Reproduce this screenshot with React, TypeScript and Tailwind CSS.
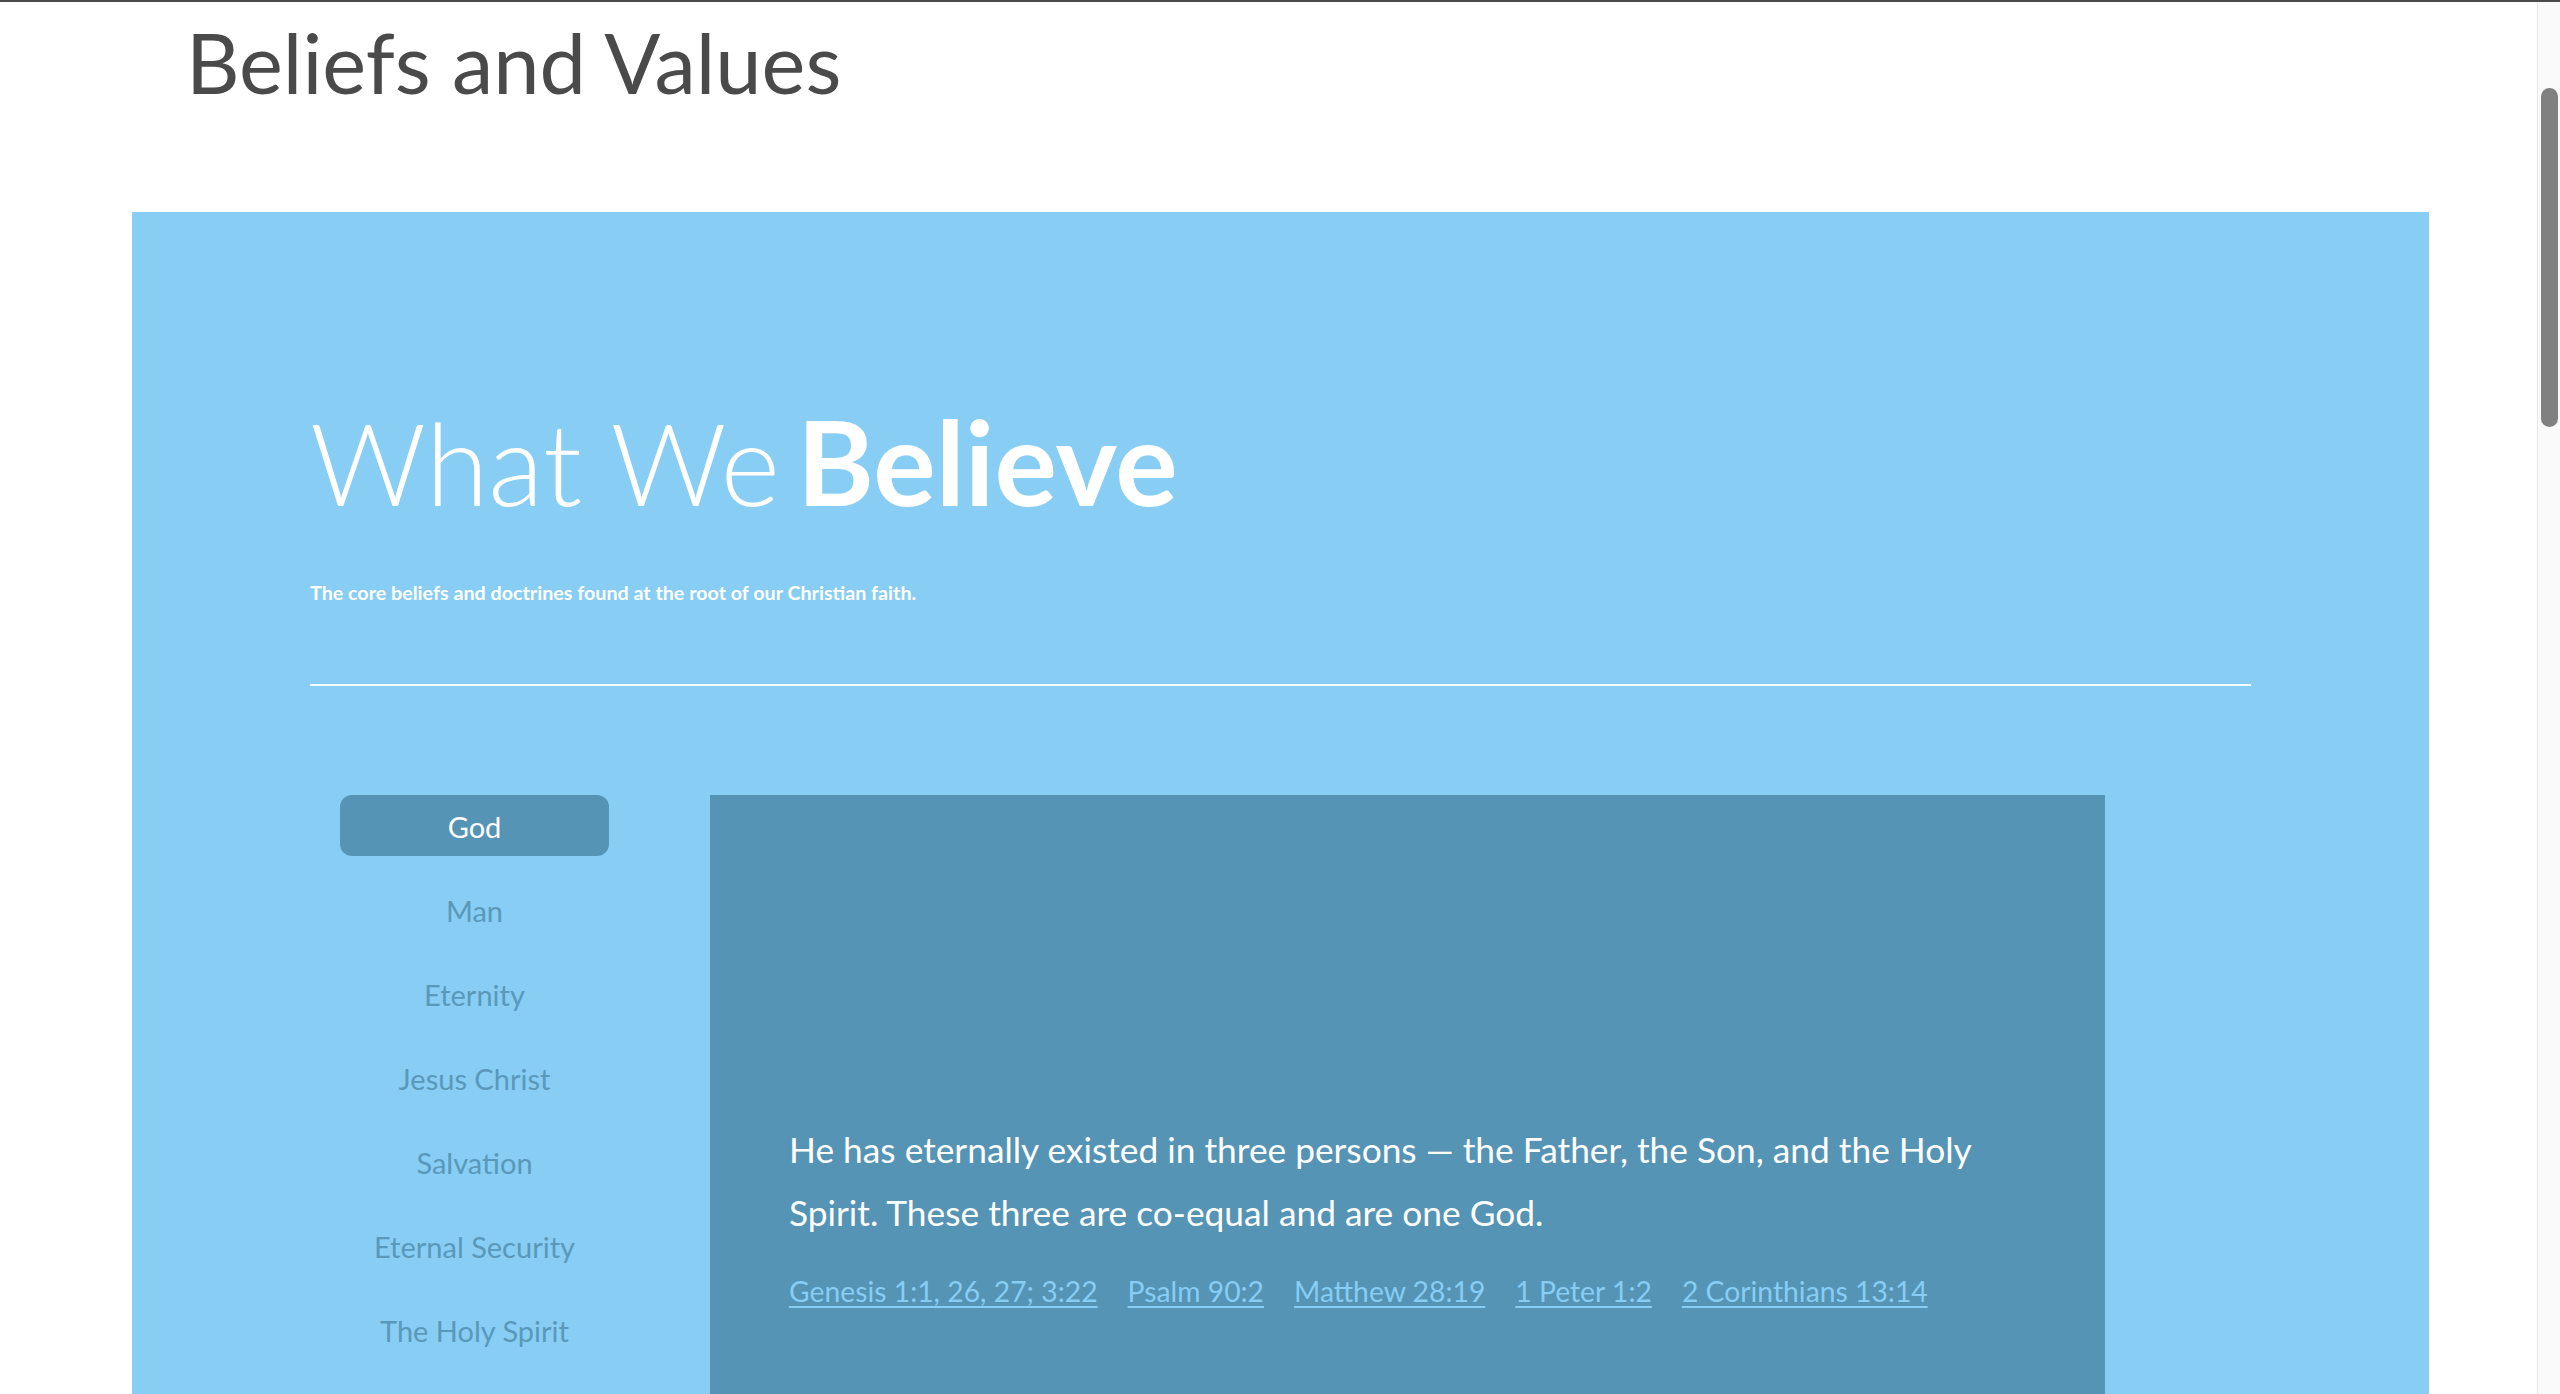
import React from "react";

const topics = [
  "God",
  "Man",
  "Eternity",
  "Jesus Christ",
  "Salvation",
  "Eternal Security",
  "The Holy Spirit",
];

const refs = [
  "Genesis 1:1, 26, 27; 3:22",
  "Psalm 90:2",
  "Matthew 28:19",
  "1 Peter 1:2",
  "2 Corinthians 13:14",
];

function TopicTabs({ active }: { active: string }) {
  return (
    <nav className="ml-[30px] flex w-[269px] shrink-0 flex-col gap-[23px]">
      {topics.map((t) => (
        <button
          key={t}
          className={
            t === active
              ? "flex h-[61px] items-center justify-center rounded-[12px] bg-[#5594b5] pt-[3px] text-[29px] text-white"
              : "flex h-[61px] items-center justify-center rounded-[12px] pt-[3px] text-[29px] text-[#5a98ba]"
          }
        >
          {t}
        </button>
      ))}
    </nav>
  );
}

function BeliefCard() {
  return (
    <article className="ml-[101px] w-[1395px] shrink-0 bg-[#5594b5] px-[79px] pt-[323px] pb-[220px]">
      <p className="text-[35.3px] leading-[63px] text-white">
        He has eternally existed in three persons — the Father, the Son, and the
        Holy Spirit. These three are co-equal and are one God.
      </p>
      <div className="mt-[26px] flex flex-wrap gap-x-[30px] text-[28.3px] leading-[42px]">
        {refs.map((r) => (
          <a key={r} href="#" className="text-[#87cdf4] underline underline-offset-[4px]">
            {r}
          </a>
        ))}
      </div>
    </article>
  );
}

export default function App() {
  return (
    <div className="flex h-[1394px] flex-col overflow-hidden bg-white font-['Lato','Liberation_Sans',sans-serif]">
      <div className="h-[2px] shrink-0 bg-[#4a4a4a]" />
      <div className="flex min-h-0 flex-1">
        <main className="min-w-0 flex-1">
          <h1 className="pl-[186px] pt-[19px] text-[83px] leading-none text-[#4a4a4a]">
            Beliefs and Values
          </h1>

          <section className="mt-[108px] ml-[132px] mr-[108px] bg-[#87cdf4] px-[178px] pt-[191px]">
            <h2 className="h-[114px] text-[114px] leading-none font-light text-white">
              What We <span className="-ml-[14px] text-[117px] font-bold">Believe</span>
            </h2>
            <p className="mt-[66px] text-[19.7px] leading-none font-bold text-white">
              The core beliefs and doctrines found at the root of our Christian faith.
            </p>
            <hr className="mt-[81px] border-0 h-[2px] bg-white/90" />

            <div className="mt-[109px] flex items-start">
              <TopicTabs active="God" />
              <BeliefCard />
            </div>
          </section>
        </main>

        <aside className="w-[23px] shrink-0 border-l border-[#e6e6e6] bg-[#fafafa] pl-[3px] pt-[86px]">
          <div className="h-[339px] w-[17px] rounded-full bg-[#808080]" />
        </aside>
      </div>
    </div>
  );
}
